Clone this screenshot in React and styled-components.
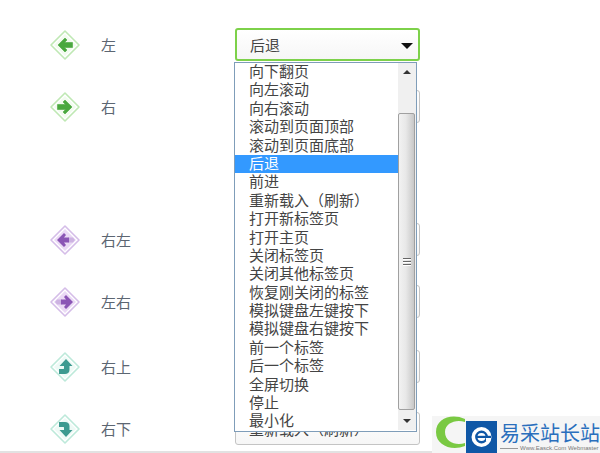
import React from "react";
import styled, { createGlobalStyle } from "styled-components";

const Global = createGlobalStyle`
  html, body { margin: 0; padding: 0; background: #fff; }
  body { width: 600px; height: 453px; overflow: hidden; font-family: "Noto Sans CJK SC", "Liberation Sans", sans-serif; text-spacing-trim: space-all; }
`;
const Page = styled.div`
  position: relative;
  width: 600px;
  height: 453px;
  overflow: hidden;
`;
const List = styled.div`
  display: flex;
  flex-direction: column;
  padding-top: 28px;
  border-bottom: 2px solid #e2e2e2;
  height: 423px;
  overflow: hidden;
`;
const Row = styled.div`
  display: flex;
  align-items: center;
  height: 33px;
  padding-bottom: ${(p) => p.$after}px;
  padding-left: 49px;
  flex: none;
`;
const Icon = styled.svg`
  width: 32px;
  height: 32px;
  flex: none;
`;
const Label = styled.span`
  width: 134px;
  margin-left: 20px;
  font-size: 15px;
  line-height: 20px;
  color: #5c6672;
  flex: none;
`;
const Select = styled.div`
  box-sizing: border-box;
  width: 185px;
  height: 33px;
  display: flex;
  align-items: center;
  padding-left: 13px;
  padding-bottom: 1px;
  font-size: 15px;
  color: #444;
  background: linear-gradient(#fff, #f6f6f6);
  border: ${(p) => (p.$active ? "2px solid #7dd14a" : "1px solid #c4c4c4")};
  border-radius: 3px;
  position: relative;
  flex: none;
`;
const Caret = styled.i`
  position: absolute;
  right: 5px;
  top: 13px;
  border-left: 6px solid transparent;
  border-right: 6px solid transparent;
  border-top: 6px solid #111;
`;
const Dropdown = styled.div`
  position: absolute;
  left: 234px;
  top: 62px;
  width: 183px;
  height: 370px;
  box-sizing: border-box;
  display: flex;
  background: #fff;
  border: 1px solid #7f9db9;
  padding-bottom: 1px;
`;
const Options = styled.div`
  flex: 1;
  display: flex;
  flex-direction: column;
  overflow: hidden;
`;
const Option = styled.div`
  box-sizing: border-box;
  height: 18.4px;
  line-height: 16.8px;
  padding-left: 14px;
  font-size: 15px;
  white-space: nowrap;
  flex: none;
  color: ${(p) => (p.$selected ? "#fff" : "#444")};
  background: ${(p) => (p.$selected ? "#3399ff" : "transparent")};
`;
const Scrollbar = styled.div`
  width: 18px;
  display: flex;
  flex-direction: column;
  background: #f0f0f0;
  flex: none;
`;
const ScrollBtn = styled.div`
  height: 18px;
  display: flex;
  align-items: center;
  justify-content: center;
  flex: none;
  background: #f0f0f0;
`;
const Tri = styled.i`
  border-left: 4px solid transparent;
  border-right: 4px solid transparent;
  ${(p) => (p.$up ? "border-bottom: 4px solid #333;" : "border-top: 4px solid #333;")}
`;
const Track = styled.div`
  flex: 1;
  display: flex;
  flex-direction: column;
  padding-top: 32px;
  padding-bottom: 2px;
`;
const Thumb = styled.div`
  flex: 1;
  margin-right: 1px;
  border: 1px solid #a0a0a0;
  border-radius: 2px;
  background: linear-gradient(90deg, #f2f2f2 0%, #e8e8e8 45%, #c8c8c8 100%);
  display: flex;
  flex-direction: column;
  align-items: center;
  justify-content: center;
  gap: 1px;
`;
const Grip = styled.i`
  width: 8px;
  height: 1px;
  background: #666;
  border-bottom: 1px solid #fff;
`;
const Logo = styled.div`
  position: absolute;
  right: 0;
  bottom: 0;
  width: 168px;
  height: 37px;
  background: #f5f5f5;
  display: flex;
  align-items: flex-end;
`;
const LogoMark = styled.svg`
  width: 65px;
  height: 37px;
  flex: none;
`;
const LogoText = styled.div`
  display: flex;
  flex-direction: column;
  width: 103px;
  height: 31px;
  padding-left: 3px;
  box-sizing: border-box;
`;
const LogoTitle = styled.div`
  font-size: 20px;
  line-height: 22px;
  color: #2a6fbd;
  white-space: nowrap;
`;
const LogoSub = styled.div`
  display: flex;
  align-items: center;
  gap: 2px;
  font-family: "Liberation Sans", sans-serif;
  font-size: 6px;
  line-height: 9px;
  color: #777;
  white-space: nowrap;
  &::before {
    content: "";
    width: 18px;
    height: 1px;
    background: #999;
    flex: none;
  }
`;

const Diamond = ({ fill, line, children }) => (
  <Icon viewBox="0 0 32 32">
    <path d="M16 2 L30 16 L16 30 L2 16 Z" fill="#fff" stroke={line} strokeWidth="1.6" strokeLinejoin="round" />
    <path d="M16 5 L27 16 L16 27 L5 16 Z" fill={fill} />
    {children}
  </Icon>
);

const green = "#4aa83f", purple = "#8a55b5", teal = "#3d9a90";
const icons = {
  left: (
    <Diamond fill="#f2fbef" line="#bfe8b4">
      <path d="M9 16 L16 9 L18 11 L15.5 13.5 L23.5 13.5 L23.5 18.5 L15.5 18.5 L18 21 L16 23 Z" fill={green} strokeLinejoin="round" stroke={green} strokeWidth="0.6" />
    </Diamond>
  ),
  right: (
    <Diamond fill="#f2fbef" line="#bfe8b4">
      <path d="M23 16 L16 9 L14 11 L16.5 13.5 L8.5 13.5 L8.5 18.5 L16.5 18.5 L14 21 L16 23 Z" fill={green} strokeLinejoin="round" stroke={green} strokeWidth="0.6" />
    </Diamond>
  ),
  rl: (
    <Diamond fill="#ead9f5" line="#d5bde8">
      <path d="M19 13.5 H24 L26 16 L24 18.5 H19 Z" fill="#cdb3e2" />
      <path d="M8 16 L15 9 L17 11 L15 13.5 L20 13.5 L20 18.5 L15 18.5 L17 21 L15 23 Z" fill={purple} />
    </Diamond>
  ),
  lr: (
    <Diamond fill="#ead9f5" line="#d5bde8">
      <path d="M13 13.5 H8 L6 16 L8 18.5 H13 Z" fill="#cdb3e2" />
      <path d="M24 16 L17 9 L15 11 L17 13.5 L12 13.5 L12 18.5 L17 18.5 L15 21 L17 23 Z" fill={purple} />
    </Diamond>
  ),
  ru: (
    <Diamond fill="#eefaf6" line="#bde9da">
      <path d="M17 8 L23.5 15 L20.5 15 L20.5 19 C20.5 21.5 18.5 23 16 23 L10 23 L10 18 L14.5 18 C14.8 18 15 17.8 15 17.5 L15 15 L10.5 15 Z" fill={teal} strokeLinejoin="round" />
    </Diamond>
  ),
  rd: (
    <Diamond fill="#eefaf6" line="#bde9da">
      <path d="M17 24 L23.5 17 L20.5 17 L20.5 13 C20.5 10.5 18.5 9 16 9 L10 9 L10 14 L14.5 14 C14.8 14 15 14.2 15 14.5 L15 17 L10.5 17 Z" fill={teal} strokeLinejoin="round" />
    </Diamond>
  ),
};

const options = ["向下翻页","向左滚动","向右滚动","滚动到页面顶部","滚动到页面底部","后退","前进","重新载入（刷新）","打开新标签页","打开主页","关闭标签页","关闭其他标签页","恢复刚关闭的标签","模拟键盘左键按下","模拟键盘右键按下","前一个标签","后一个标签","全屏切换","停止","最小化"];

const rows = [
  { icon: "left", label: "左", value: "后退", active: true, after: 29 },
  { icon: "right", label: "右", value: "", after: 100 },
  { icon: "rl", label: "右左", value: "", after: 29 },
  { icon: "lr", label: "左右", value: "", after: 32 },
  { icon: "ru", label: "右上", value: "", after: 29 },
  { icon: "rd", label: "右下", value: "重新载入（刷新）", after: 6 },
];

export default function App() {
  return (
    <Page>
      <Global />
      <List>
        {rows.map((r) => (
          <Row key={r.label} $after={r.after}>
            {icons[r.icon]}
            <Label>{r.label}</Label>
            <Select $active={r.active}>
              {r.value}
              {r.active && <Caret />}
            </Select>
          </Row>
        ))}
      </List>
      <Dropdown>
        <Options>
          {options.map((o) => (
            <Option key={o} $selected={o === "后退"}>{o}</Option>
          ))}
        </Options>
        <Scrollbar>
          <ScrollBtn><Tri $up /></ScrollBtn>
          <Track>
            <Thumb><Grip /><Grip /><Grip /></Thumb>
          </Track>
          <ScrollBtn><Tri /></ScrollBtn>
        </Scrollbar>
      </Dropdown>
      <Logo>
        <LogoMark viewBox="0 0 65 37">
          <path d="M33 3 C20 -3 4 2 4 16 C4 30 20 35 33 30 L33 27 C24 30 13 26 13 16 C13 7 24 3 33 6 Z" fill="#7ac943" />
          <rect x="34" y="5" width="31" height="32" fill="#0f57a6" />
          <circle cx="49.5" cy="21" r="10" fill="#fff" />
          <circle cx="49.5" cy="21" r="5.2" fill="none" stroke="#0f57a6" strokeWidth="2.4" />
          <rect x="45" y="19.8" width="14" height="2.2" fill="#0f57a6" />
          <rect x="54" y="22" width="4" height="3" fill="#fff" />
        </LogoMark>
        <LogoText>
          <LogoTitle>易采站长站</LogoTitle>
          <LogoSub>Www.Easck.Com Webmaster</LogoSub>
        </LogoText>
      </Logo>
    </Page>
  );
}
